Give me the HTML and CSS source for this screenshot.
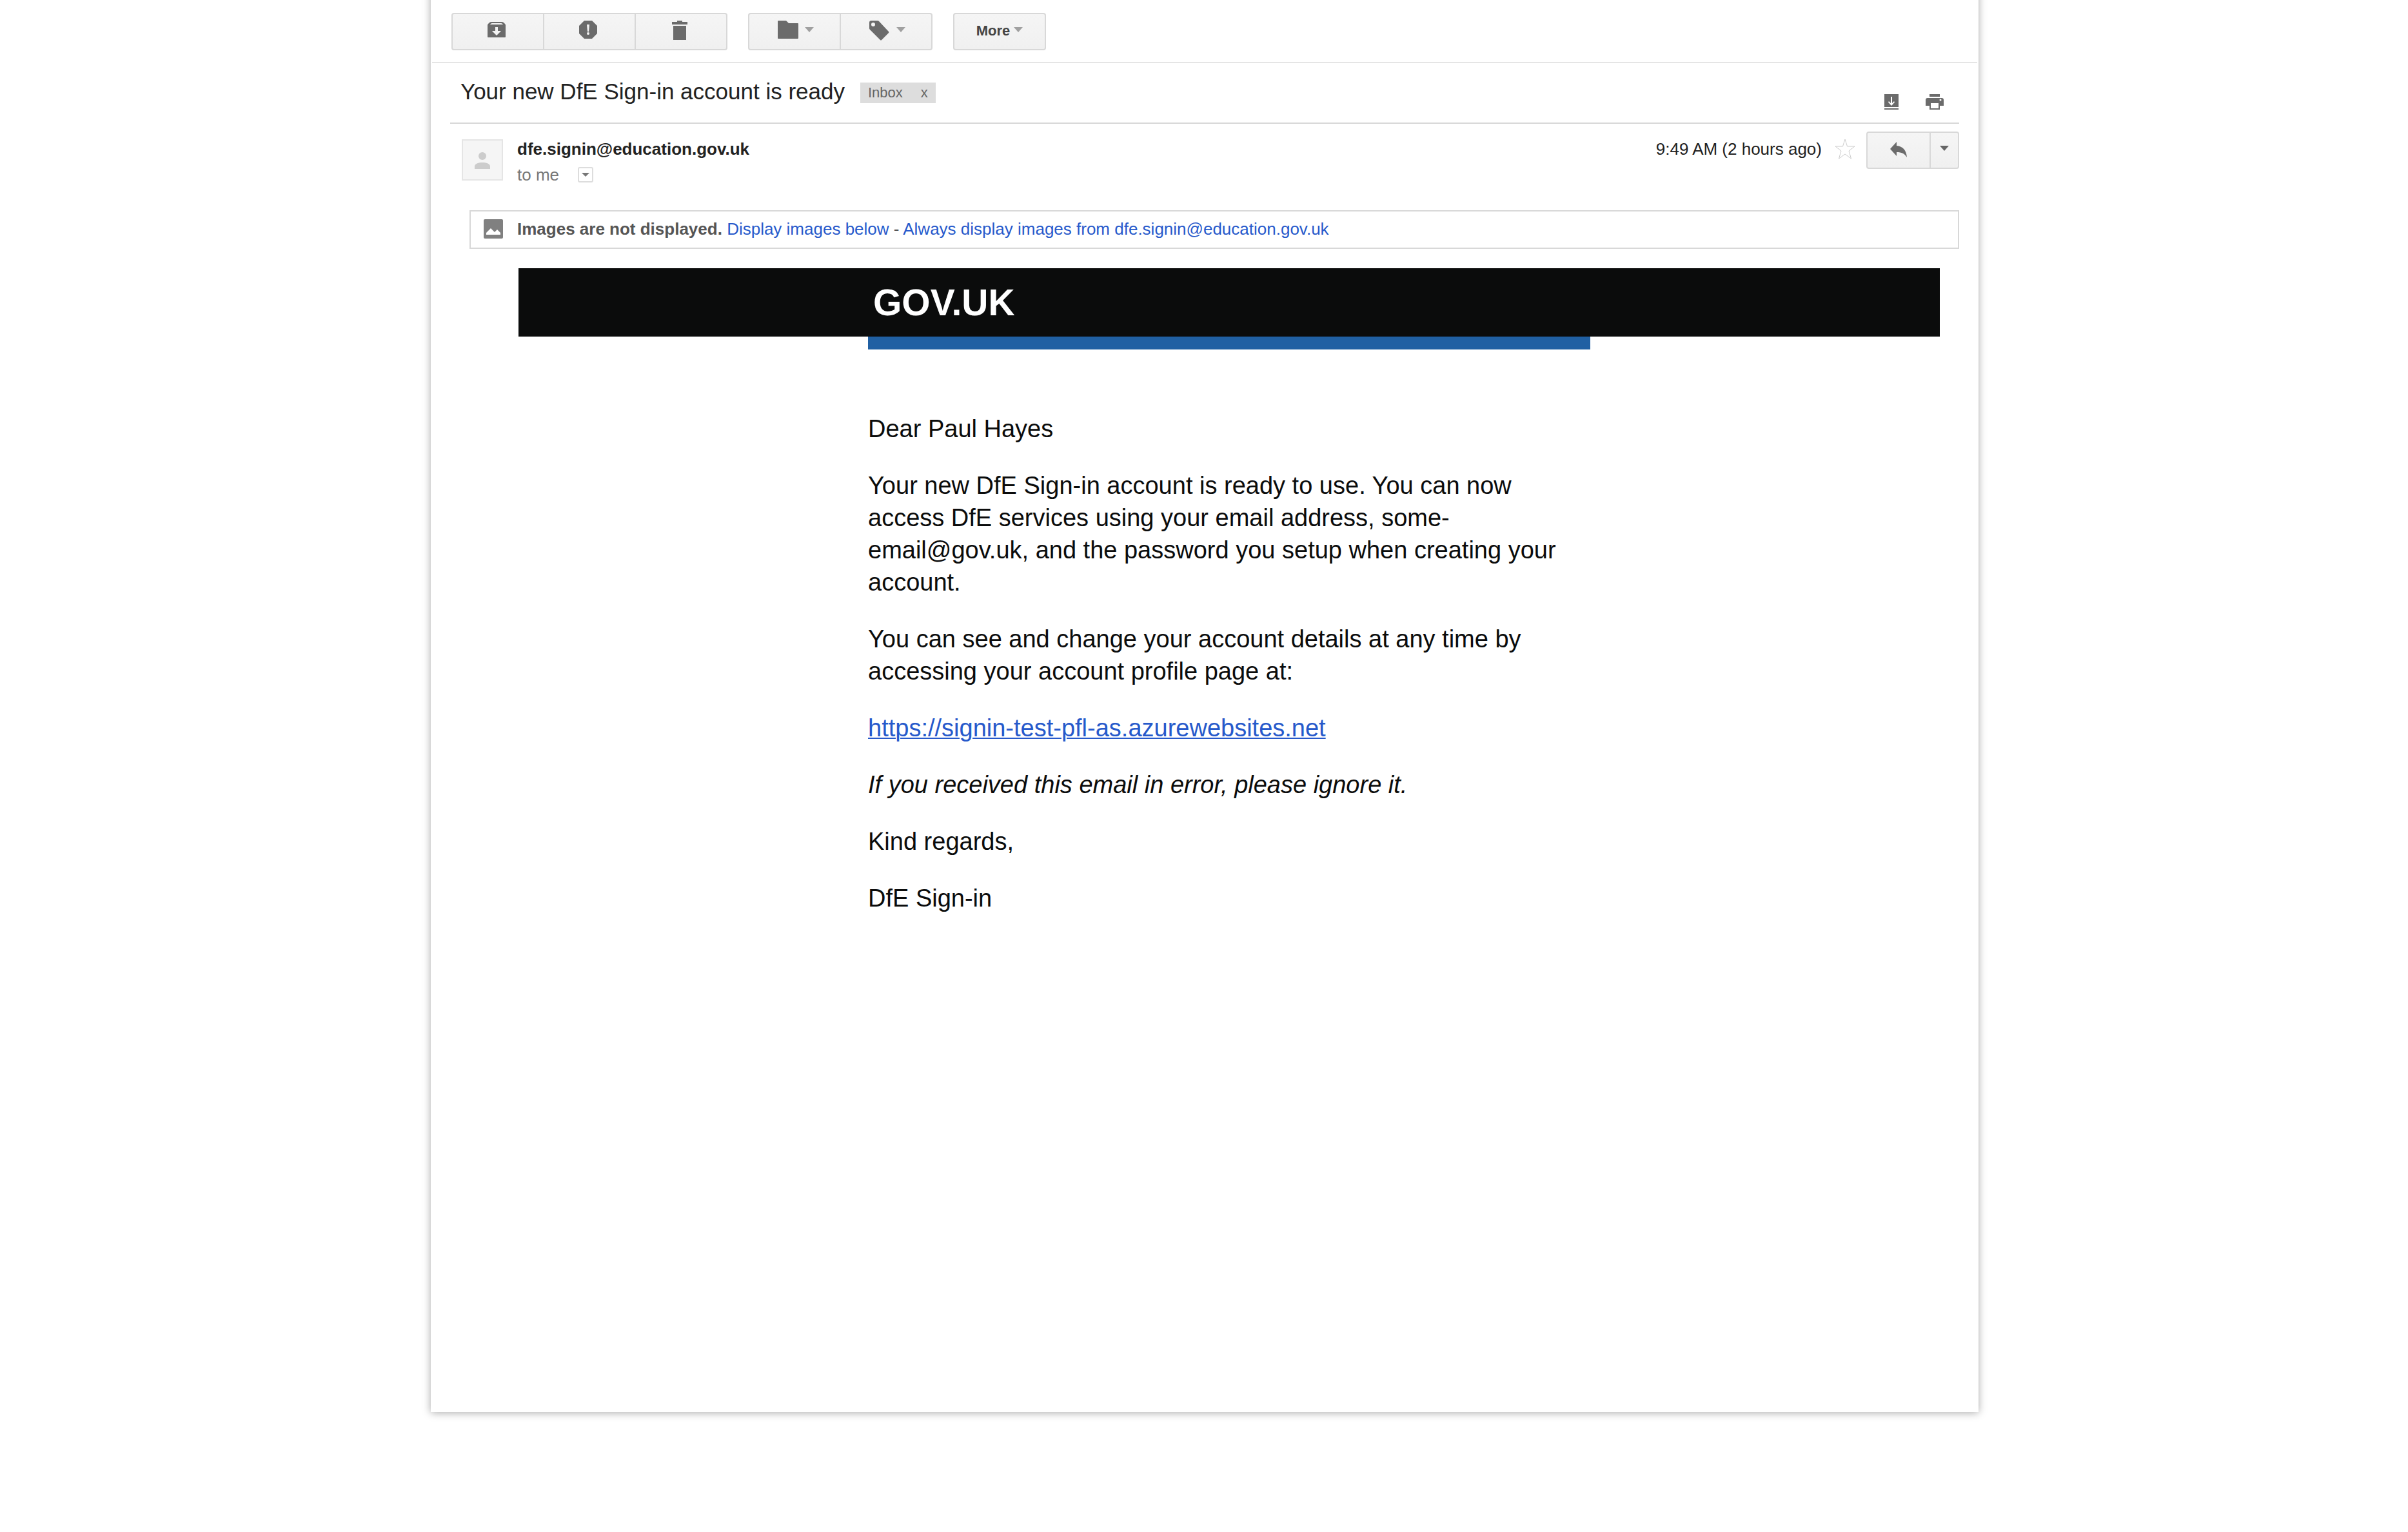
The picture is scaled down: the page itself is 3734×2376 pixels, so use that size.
FILE: index.html
```html
<!DOCTYPE html>
<html lang="en">
<head>
<meta charset="utf-8">
<title>Your new DfE Sign-in account is ready</title>
<link rel="stylesheet" href="styles.css">
</head>
<body>
<main class="card">
  <div class="toolbar">
    <div class="group">
      <button class="btn" type="button" aria-label="Archive">
        <svg class="icon" viewBox="0 0 32 32"><path fill-rule="evenodd" d="M3 28Q2 28 2 27V9Q2 8 3 7L5 5Q6 4 8 4H24Q26 4 27 5L29 7Q30 8 30 9V27Q30 28 29 28ZM6 8H26Q25 6 23 6H9Q7 6 6 8ZM14 12V18H9L16 25L23 18H18V12Z"/></svg>
      </button>
      <button class="btn" type="button" aria-label="Report spam">
        <svg class="icon" viewBox="0 0 32 32"><path fill-rule="evenodd" d="M10 2H22L30 10V22L22 30H10L2 22V10ZM14 8L15 19H17L18 8Z"/><circle class="hole" cx="16" cy="22" r="2"/></svg>
      </button>
      <button class="btn" type="button" aria-label="Delete">
        <svg class="icon" viewBox="0 0 32 32"><path d="M4 4H12V2H20V4H28V8H4ZM6 10H26V32H6Z"/></svg>
      </button>
    </div>
    <div class="group">
      <button class="btn btn-menu" type="button" aria-label="Move to">
        <svg class="icon" viewBox="0 0 32 32"><path d="M1 2H13L17 6H31Q32 6 32 7V29Q32 30 31 30H1Q0 30 0 29V3Q0 2 1 2Z"/></svg>
        <span class="caret"></span>
      </button>
      <button class="btn btn-menu" type="button" aria-label="Labels">
        <svg class="icon" viewBox="0 0 32 32"><path fill-rule="evenodd" d="M3 2H13Q14 2 15 3L30 19Q31 20 30 21L19 32Q18 33 17 32L1 16Q0 15 0 14V5Q0 2 3 2ZM6 5A3 3 0 1 0 6 11A3 3 0 1 0 6 5Z"/></svg>
        <span class="caret"></span>
      </button>
    </div>
    <div class="group">
      <button class="btn btn-more" type="button"><span class="btn-label">More</span><span class="caret"></span></button>
    </div>
  </div>

  <header class="subject">
    <h1 class="subject-text">Your new DfE Sign-in account is ready</h1>
    <span class="tag"><span>Inbox</span><button class="tag-remove" type="button" aria-label="Remove label Inbox">x</button></span>
    <div class="subject-actions">
      <button class="plain" type="button" aria-label="Save">
        <svg class="save" viewBox="0 0 22 24"><path fill-rule="evenodd" d="M0 0H22V20H0ZM0 22H22V24H0ZM10 4V14L7 11L6 12.500L11 18L16 12.500L15 11L12 14V4Z"/></svg>
      </button>
      <button class="plain" type="button" aria-label="Print">
        <svg class="print" viewBox="0 0 28 24"><path fill-rule="evenodd" d="M6 0H22V4H6ZM3 6H25Q28 6 28 9V18H22V24H6V18H0V9Q0 6 3 6ZM8 14V22H20V14ZM23 7.500A1.500 1.500 0 1 0 23 10.500A1.500 1.500 0 1 0 23 7.500Z"/></svg>
      </button>
    </div>
  </header>

  <section class="message">
    <div class="sender">
      <div class="avatar">
        <svg viewBox="0 0 60 60"><circle cx="30" cy="24" r="6"/><path d="M18 44V40C18 32 42 32 42 40V44Z"/></svg>
      </div>
      <div class="names">
        <div class="from">dfe.signin@education.gov.uk</div>
        <div class="to"><span>to me</span><button class="details" type="button" aria-label="Show details"><span class="caret caret-small"></span></button></div>
      </div>
      <div class="meta">
        <time class="time">9:49 AM (2 hours ago)</time>
        <button class="plain star" type="button" aria-label="Star"><svg viewBox="0 0 32 32"><path d="M16 1L19.500 12H31L22 19L25.500 31L16 24L6.500 31L10 19L1 12H12.500Z"/></svg></button>
        <div class="group">
          <button class="btn btn-reply" type="button" aria-label="Reply">
            <svg class="reply" viewBox="0 0 26 26"><path d="M0 12L10 1V7C20 8 25 14 26 25C22 19 18 17 10 17V23Z"/></svg>
          </button>
          <button class="btn btn-arrow" type="button" aria-label="More options"><span class="caret caret-dark"></span></button>
        </div>
      </div>
    </div>

    <div class="notice">
      <svg class="notice-icon" viewBox="0 0 30 30"><rect width="30" height="30" rx="2"/><path class="notice-hill" d="M4 24V21L11 14L17 20L21 16L26 21V24Z"/></svg>
      <p class="notice-text"><b>Images are not displayed.</b> <a href="#">Display images below</a> - <a href="#">Always display images from dfe.signin@education.gov.uk</a></p>
    </div>

    <article class="email">
      <div class="banner"><div class="column logo">GOV.UK</div></div>
      <div class="column stripe"></div>
      <div class="column copy">
        <p>Dear Paul Hayes</p>
        <p>Your new DfE Sign-in account is ready to use. You can now access DfE services using your email address, some-email@gov.uk, and the password you setup when creating your account.</p>
        <p>You can see and change your account details at any time by accessing your account profile page at:</p>
        <p><a class="link" href="https://signin-test-pfl-as.azurewebsites.net">https://signin-test-pfl-as.azurewebsites.net</a></p>
        <p><em>If you received this email in error, please ignore it.</em></p>
        <p>Kind regards,</p>
        <p>DfE Sign-in</p>
      </div>
    </article>
  </section>
</main>
</body>
</html>
```
FILE: styles.css
```css
* { box-sizing: border-box; }

body {
  min-height: 100vh;
  margin: 0;
  padding-left: 2px;
  background: #fff;
  color: #222;
  font-family: "Liberation Sans", Arial, sans-serif;
  font-size: 26px;
}

h1, p { margin: 0; }
svg { display: block; }
a { color: #2659cb; text-decoration: none; }
button { font: inherit; color: inherit; cursor: pointer; }

/* The card runs off the top edge so its side shadows stay even. */
.card {
  max-width: 2400px;
  min-height: calc(100vh - 146px);
  margin: -40px auto 0;
  padding-top: 40px;
  background: #fff;
  box-shadow: 0 1px 12px rgba(0, 0, 0, 0.34);
}

.toolbar {
  display: flex;
  gap: 32px;
  margin: 0 2px;
  padding: 20px 30px 18px;
  border-bottom: 2px solid #e5e5e5;
}

.group { display: flex; }

.btn {
  display: flex;
  align-items: center;
  justify-content: center;
  width: 144px;
  height: 58px;
  padding: 0 4px 6px 0;
  border: 2px solid #d8d8d8;
  background: linear-gradient(#f5f5f5, #f0f0f0);
}
.btn + .btn { margin-left: -2px; }
.btn:first-child { border-radius: 4px 0 0 4px; }
.btn:last-child { border-radius: 0 4px 4px 0; }
.btn:only-child { border-radius: 4px; }
.btn-menu { gap: 10px; padding: 0 0 6px 4px; }
.btn-more { gap: 6px; padding: 0 0 6px; color: #444; font-size: 22px; font-weight: bold; }
.btn-label { padding-top: 4px; }
.btn-reply { width: 100px; padding: 0 0 2px; }
.btn-arrow { width: 46px; padding: 0 0 6px; }

.icon { width: 32px; height: 32px; fill: #6b6b6b; overflow: visible; }
.hole { fill: #f3f3f3; }
.reply { width: 26px; height: 26px; fill: #6b6b6b; }

.caret {
  border: 7px solid transparent;
  border-top: 8px solid #a0a0a0;
  border-bottom: 0;
}
.caret-dark { border-top-color: #666; }
.caret-small { border-width: 6px 6px 0; border-top-color: #777; }

.plain { padding: 0; border: 0; background: none; }

.subject {
  display: flex;
  align-items: flex-start;
  margin: 0 30px;
  padding: 22px 24px 20px 16px;
  border-bottom: 2px solid #d8d8d8;
}
.subject-text { font-size: 35px; font-weight: normal; line-height: 44px; }

.tag {
  display: flex;
  align-items: center;
  gap: 28px;
  height: 32px;
  margin: 8px 0 0 24px;
  padding: 0 12px;
  background: #ddd;
  color: #666;
  font-size: 22px;
}
.tag-remove { padding: 0; border: 0; background: none; }

.subject-actions {
  display: flex;
  gap: 42px;
  margin-left: auto;
  padding-top: 26px;
}
.save { width: 22px; height: 24px; fill: #6b6b6b; }
.print { width: 28px; height: 24px; fill: #6b6b6b; }

.message { margin: 0 30px; padding-top: 12px; }

.sender { display: flex; align-items: flex-start; padding-left: 18px; }

.avatar {
  width: 64px;
  height: 64px;
  margin-top: 12px;
  border: 2px solid #e5e5e5;
  background: #f5f5f5;
  fill: #ccc;
}

.names { margin: 7px 0 0 22px; line-height: 40px; }
.from { font-weight: bold; }
.to { display: flex; align-items: center; gap: 29px; color: #777; }
.details {
  display: flex;
  align-items: center;
  justify-content: center;
  width: 24px;
  height: 24px;
  padding: 0;
  border: 2px solid #ddd;
  border-radius: 3px;
  background: #fff;
}

.meta { display: flex; align-items: center; margin-left: auto; }
.time { padding-bottom: 4px; }
.star { margin: 0 17px 0 20px; padding-bottom: 4px; }
.star svg { width: 32px; height: 32px; fill: #fff; stroke: #ccc; }

.notice {
  display: flex;
  align-items: center;
  gap: 22px;
  min-height: 60px;
  margin: 35px 0 0 30px;
  padding: 0 20px 2px;
  border: 2px solid #d8d8d8;
  color: #555;
}
.notice-icon { width: 30px; height: 30px; fill: #808080; }
.notice-hill { fill: #fff; }

.email { margin: 30px 30px 0 106px; color: #0b0c0c; }
.column { max-width: 1120px; margin: 0 auto; }
.banner { background: #0b0c0c; }
.logo { padding-left: 8px; color: #fff; font-size: 57px; font-weight: bold; line-height: 106px; }
.stripe { height: 20px; background: #2060a3; }
.copy {
  display: flex;
  flex-direction: column;
  gap: 38px;
  padding: 98px 0;
  font-size: 38px;
  line-height: 50px;
}
.link { text-decoration: underline; text-decoration-thickness: 2px; text-underline-offset: 2px; }
```
